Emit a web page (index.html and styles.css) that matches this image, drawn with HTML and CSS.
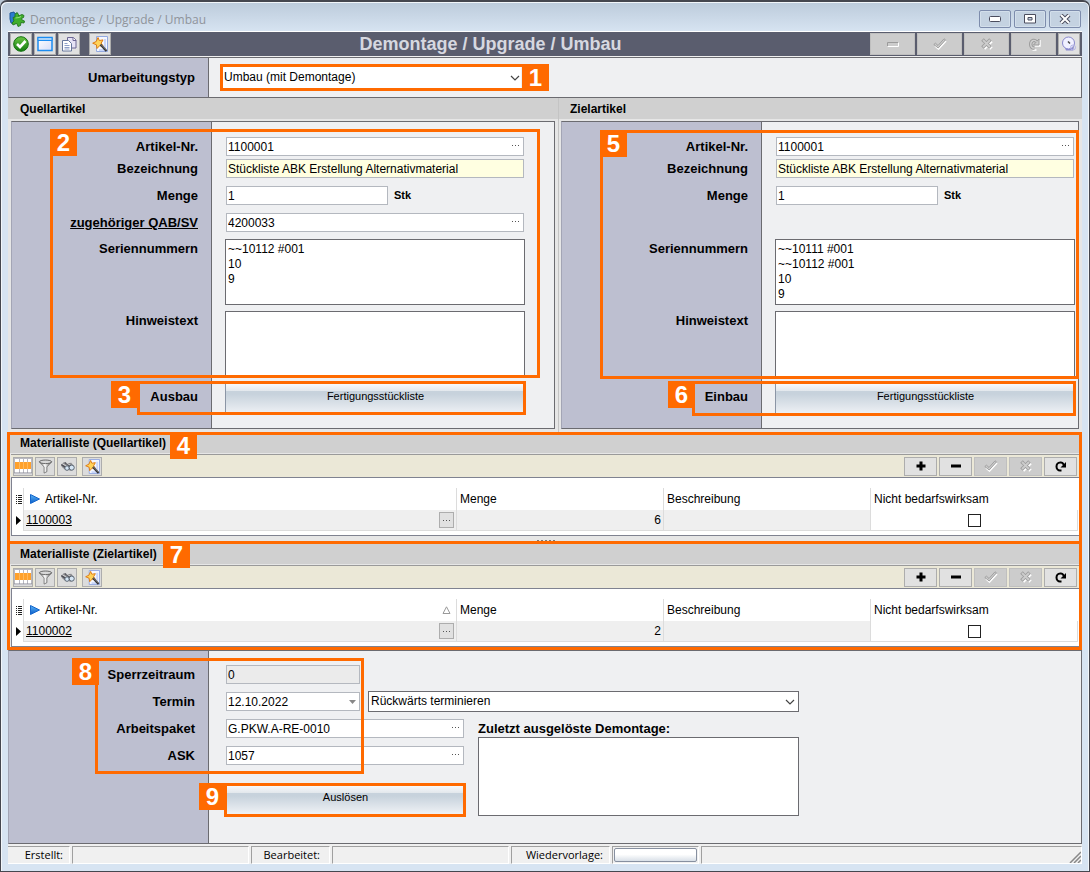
FILE: index.html
```
<!DOCTYPE html>
<html lang="de">
<head>
<meta charset="utf-8">
<title>Demontage / Upgrade / Umbau</title>
<link rel="stylesheet" href="styles.css">
</head>
<body>
<svg class="defs" aria-hidden="true">
  <defs>
    <linearGradient id="gGreen" x1="0" y1="0" x2="0" y2="1"><stop offset="0" stop-color="#6cc644"/><stop offset="1" stop-color="#127a10"/></linearGradient>
    <linearGradient id="gWin" x1="0" y1="0" x2="1" y2="1"><stop offset="0" stop-color="#fff"/><stop offset="1" stop-color="#d5dcf8"/></linearGradient>
    <linearGradient id="gFun" x1="0" y1="0" x2="1" y2="0"><stop offset="0" stop-color="#777"/><stop offset=".45" stop-color="#fff"/><stop offset="1" stop-color="#555"/></linearGradient>
    <linearGradient id="gPlay" x1="0" y1="0" x2="0" y2="1"><stop offset="0" stop-color="#5ab4f5"/><stop offset="1" stop-color="#0a5cc8"/></linearGradient>
  </defs>
  <symbol id="i-wand" viewBox="0 0 16 16">
    <path d="M4.500.5h11v15h-11z" fill="#f4f7ff" stroke="#93a9e0"/>
    <path d="M13 3v11H7" fill="none" stroke="#c9d6fa" stroke-width="2"/>
    <path d="M6 1.500l1.300 3 3.700-.6-1.800 3.300 2 3-3.600-.5L5 12.500l-.6-3.700L.7 7.200l3.500-1.700z" fill="#ffd35a" stroke="#e07b10"/>
    <path d="M8.500 8.500l6 6.500" stroke="#333" stroke-width="2.200"/>
    <path d="M9 8.500l5.500 5.500" stroke="#aaa" stroke-width=".7"/>
  </symbol>
  <symbol id="i-grid" viewBox="0 0 18 16">
    <path d="M0 0h18v16H0z" fill="#fff"/>
    <path d="M.5 0v15M5.500 0v15M9.500 0v15M13.500 0v15M17.500 0v15M0 .5h18" stroke="#b9b9c2"/>
    <path d="M1 4h16v7H1z" fill="#ffa12b"/>
    <path d="M5.500 4v7M9.500 4v7M13.500 4v7" stroke="#ffb85c"/>
    <path d="M0 15h18" stroke="#8a8a96"/>
  </symbol>
  <symbol id="i-funnel" viewBox="0 0 16 16">
    <path d="M1.500 3l5 5.500V15l3-1.500v-5L14.500 3z" fill="url(#gFun)" stroke="#666" stroke-width=".8"/>
    <ellipse cx="8" cy="3" rx="6.500" ry="1.900" fill="#d8d8d8" stroke="#555" stroke-width=".9"/>
  </symbol>
  <symbol id="i-binoc" viewBox="0 0 16 16">
    <path d="M1 6l3-2.500 4 1 4-.5 3 4-1.500 4-3 .5-2-2-3 1-3.500-3z" fill="#8c8c90"/>
    <path d="M1.500 6l6 4M5 3.800l6 4" stroke="#4e4e55" stroke-width="1.300"/>
    <path d="M2.500 5l5 3M7 4.500l4 2" stroke="#ddd"/>
    <circle cx="7.500" cy="9.700" r="2.400" fill="#d6e6f5" stroke="#55606c"/>
    <circle cx="12.500" cy="9.200" r="2.700" fill="#d6e6f5" stroke="#55606c"/>
  </symbol>
  <symbol id="i-check" viewBox="0 0 14 12">
    <path d="M2 8l3.500 3L13 3" fill="none" stroke="#fff" stroke-width="1.600"/>
    <path d="M.8 6.500L2.500 5.200 5 7.500 11 .8l1.500 1L5.200 10z" fill="#ccc" stroke="#9b9b9b" stroke-width=".9"/>
  </symbol>
  <symbol id="i-cross" viewBox="0 0 12 12">
    <path d="M3 3l7.500 7.500M10.500 3L3 10.500" stroke="#fff" stroke-width="3.400"/>
    <path d="M1.500 1.500l8 8M9.500 1.500l-8 8" stroke="#9b9b9b" stroke-width="3.600"/>
    <path d="M2 2l7 7M9 2L2 9" stroke="#ccc" stroke-width="1.800"/>
  </symbol>
  <symbol id="i-redo" viewBox="0 0 12 12">
    <path d="M6.500 10.500H5A3.500 4 0 0 1 5 2.500C7 2 8.500 3.500 8.500 5" fill="none" stroke="#000" stroke-width="2"/>
    <path d="M11 2v5.500H5.500z" fill="#000"/>
  </symbol>
  <symbol id="i-redo-off" viewBox="0 0 14 14">
    <path d="M13 3v6H7.500M9.500 13H5.500" fill="none" stroke="#fff" stroke-width="1.400"/>
    <path d="M7.500 11H6A3.500 4 0 0 1 6 3.500C8 3 9 4 9.500 5" fill="none" stroke="#9b9b9b" stroke-width="3.400"/>
    <path d="M12 2v6H6.500z" fill="#ccc" stroke="#9b9b9b"/>
    <path d="M7.500 11H6A3.500 4 0 0 1 6 3.500C8 3 9 4 9.500 5" fill="none" stroke="#d0d0d0" stroke-width="1.400"/>
  </symbol>
  <symbol id="i-plus" viewBox="0 0 10 10"><path d="M5 .5v9M.5 5h9" stroke="#000" stroke-width="3"/></symbol>
  <symbol id="i-minus" viewBox="0 0 10 10"><path d="M0 5h10" stroke="#000" stroke-width="3"/></symbol>
  <symbol id="i-chev" viewBox="0 0 10 6"><path d="M1 1l4 4 4-4" fill="none" stroke="#444" stroke-width="1.200"/></symbol>
  <symbol id="i-dots" viewBox="0 0 9 3"><path d="M1 1h1v1H1zM4 1h1v1H4zM7 1h1v1H7z" fill="#555"/></symbol>
</svg>

<div class="window">
  <header class="titlebar">
    <svg class="ic16" viewBox="0 0 16 16"><path d="M1 2l4-1 1 2 2-1 1 5-3 6-4-1-1-4z" fill="#2d7cd0" stroke="#1b5698"/><path d="M4 6.500l2-.5V3.500l2-2 1.500 2V5L13 3.500l2 1-.5 2-2 1 .5 1.500 2.500 1-.5 2-3-.5-.5 3-2.500 1-1-3-2 .5L4 14l-1-2 2-2z" fill="#3fae2e" stroke="#23771c" stroke-width=".9"/><path d="M6.500 7l3.500-.5L12 5.500" fill="none" stroke="#95e07a"/></svg>
    <span class="caption">Demontage / Upgrade / Umbau</span>
    <button class="sysbtn" type="button" aria-label="Minimieren"><svg width="12" height="6" viewBox="0 0 12 6"><rect x=".5" y=".5" width="11" height="5" rx="1" fill="#fff" stroke="#4b4d5e"/></svg></button>
    <button class="sysbtn" type="button" aria-label="Maximieren"><svg width="12" height="10" viewBox="0 0 12 10"><path d="M.5.5h11v8.500H.5z" fill="#fff" stroke="#4b4d5e"/><path d="M4 3.500h4v2.500H4z" fill="#c4d2e2" stroke="#4b4d5e"/></svg></button>
    <button class="sysbtn" type="button" aria-label="Schließen"><svg width="12" height="10" viewBox="0 0 12 10"><path d="M2 1l8 8M10 1L2 9" stroke="#4b4d5e" stroke-width="4"/><path d="M2 1l8 8M10 1L2 9" stroke="#fff" stroke-width="2"/></svg></button>
  </header>

  <div class="content">
    <div class="toolbar">
      <button class="tool" type="button" aria-label="OK"><svg class="ic16" viewBox="0 0 16 16"><circle cx="8" cy="8" r="7.300" fill="url(#gGreen)" stroke="#12700f"/><path d="M4 8l3 3 5.500-6" fill="none" stroke="#fff" stroke-width="2.600"/></svg></button>
      <button class="tool" type="button" aria-label="Fenster"><svg class="ic16" viewBox="0 0 16 16"><path d="M1 1.500h14v13H1z" fill="url(#gWin)" stroke="#1c8cf0" stroke-width="1.500"/><path d="M1 1.500h14v3H1z" fill="#a9d4fb" stroke="#1c8cf0"/></svg></button>
      <button class="tool" type="button" aria-label="Kopieren"><svg class="ic16" viewBox="0 0 16 16"><path d="M6.500 1.500h6l2.500 2.500v8H6.500z" fill="#e6e3f6" stroke="#6d6795"/><path d="M12 1.500V4.500h3" fill="#fff" stroke="#6d6795"/><path d="M1.500 4.500h6l3 3v7.500h-9z" fill="#fff" stroke="#67779c"/><path d="M3.500 7.500h3M3.500 9.500h5M3.500 11.500h5M3.500 13h5" stroke="#8fa0c8"/></svg></button>
      <button class="tool tool-gap" type="button" aria-label="Assistent"><svg class="ic16"><use href="#i-wand"/></svg></button>
      <h1>Demontage / Upgrade / Umbau</h1>
      <button class="wide" type="button" disabled aria-label="Entfernen"><svg width="12" height="5" viewBox="0 0 12 5"><path d="M.5 4.500v-4h11" fill="none" stroke="#9b9b9b"/><path d="M.5 4.500h11v-4" fill="none" stroke="#fff"/></svg></button>
      <button class="wide" type="button" disabled aria-label="Speichern"><svg width="14" height="12"><use href="#i-check"/></svg></button>
      <button class="wide" type="button" disabled aria-label="Verwerfen"><svg width="12" height="12"><use href="#i-cross"/></svg></button>
      <button class="wide" type="button" disabled aria-label="Aktualisieren"><svg width="14" height="14"><use href="#i-redo-off"/></svg></button>
      <button class="tool" type="button" aria-label="Verlauf"><svg class="ic16" viewBox="0 0 16 16"><path d="M4 12l9-1-1 3.500H5z" fill="#8d8dd0"/><circle cx="7.500" cy="7" r="6" fill="#f1f1ff" stroke="#8888cc"/><circle cx="12" cy="11.500" r="2.500" fill="none" stroke="#b3b3e6"/><path d="M7 5.500l2 2" stroke="#444" stroke-width="1.500"/></svg></button>
    </div>

    <div class="typebar split">
      <label class="lbl" for="typ">Umarbeitungstyp</label>
      <div class="combo typ"><select id="typ"><option>Umbau (mit Demontage)</option></select><svg width="10" height="6"><use href="#i-chev"/></svg></div>
      <div class="mark m1"></div><b class="tag t1">1</b>
    </div>

    <div class="columns">
      <section class="article">
        <h2>Quellartikel</h2>
        <div class="panel split">
          <div class="row"><label class="lbl" for="q1">Artikel-Nr.</label><div class="field"><input id="q1" value="1100001"><svg width="9" height="3"><use href="#i-dots"/></svg></div></div>
          <div class="row"><label class="lbl" for="q2">Bezeichnung</label><div class="field"><input class="yellow" id="q2" value="Stückliste ABK Erstellung Alternativmaterial" readonly></div></div>
          <div class="row"><label class="lbl" for="q3">Menge</label><div class="field short"><input id="q3" value="1"></div><span class="unit">Stk</span></div>
          <div class="row snug"><label class="lbl" for="q4"><a href="#q4">zugehöriger QAB/SV</a></label><div class="field"><input id="q4" value="4200033"><svg width="9" height="3"><use href="#i-dots"/></svg></div></div>
          <div class="row area"><label class="lbl" for="q5">Seriennummern</label><textarea id="q5">~~10112 #001
10
9</textarea></div>
          <div class="row area"><label class="lbl" for="q6">Hinweistext</label><textarea id="q6"></textarea></div>
          <div class="row btnrow"><span class="lbl">Ausbau</span><button class="push" type="button">Fertigungsstückliste</button></div>
        </div>
        <div class="mark m2"></div><b class="tag t2">2</b>
        <div class="mark m3"></div><b class="tag t3">3</b>
      </section>
      <section class="article">
        <h2>Zielartikel</h2>
        <div class="panel split">
          <div class="row"><label class="lbl" for="z1">Artikel-Nr.</label><div class="field"><input id="z1" value="1100001"><svg width="9" height="3"><use href="#i-dots"/></svg></div></div>
          <div class="row"><label class="lbl" for="z2">Bezeichnung</label><div class="field"><input class="yellow" id="z2" value="Stückliste ABK Erstellung Alternativmaterial" readonly></div></div>
          <div class="row"><label class="lbl" for="z3">Menge</label><div class="field short"><input id="z3" value="1"></div><span class="unit">Stk</span></div>
          <div class="row snug"></div>
          <div class="row area"><label class="lbl" for="z5">Seriennummern</label><textarea id="z5">~~10111 #001
~~10112 #001
10
9</textarea></div>
          <div class="row area"><label class="lbl" for="z6">Hinweistext</label><textarea id="z6"></textarea></div>
          <div class="row btnrow"><span class="lbl">Einbau</span><button class="push" type="button">Fertigungsstückliste</button></div>
        </div>
        <div class="mark m5"></div><b class="tag t5">5</b>
        <div class="mark m6"></div><b class="tag t6">6</b>
      </section>
    </div>

    <section class="list">
      <h2>Materialliste (Quellartikel)</h2>
      <div class="listbar">
        <button class="mini" type="button" aria-label="Ansicht"><svg width="18" height="16"><use href="#i-grid"/></svg></button>
        <button class="mini" type="button" aria-label="Filter"><svg class="ic16"><use href="#i-funnel"/></svg></button>
        <button class="mini" type="button" aria-label="Suchen"><svg class="ic16"><use href="#i-binoc"/></svg></button>
        <button class="mini mini-gap" type="button" aria-label="Assistent"><svg class="ic16"><use href="#i-wand"/></svg></button>
        <span class="grow"></span>
        <button class="mid" type="button" aria-label="Hinzufügen"><svg width="10" height="10"><use href="#i-plus"/></svg></button>
        <button class="mid" type="button" aria-label="Löschen"><svg width="10" height="10"><use href="#i-minus"/></svg></button>
        <button class="mid" type="button" disabled aria-label="Übernehmen"><svg width="14" height="12"><use href="#i-check"/></svg></button>
        <button class="mid" type="button" disabled aria-label="Abbrechen"><svg width="12" height="12"><use href="#i-cross"/></svg></button>
        <button class="mid" type="button" aria-label="Aktualisieren"><svg width="12" height="12"><use href="#i-redo"/></svg></button>
      </div>
      <div class="tablebox">
        <table>
          <colgroup><col class="c0"><col><col class="cw"><col class="cw"><col class="cw"></colgroup>
          <thead><tr>
            <th><svg width="7" height="9" viewBox="0 0 7 9"><path d="M0 .5h1M2 .5h4M0 2.500h1M2 2.500h4M0 4.500h1M2 4.500h4M0 6.500h1M2 6.500h4M0 8.500h1M2 8.500h4" stroke="#222"/></svg></th>
            <th><div class="cell"><svg class="play" width="10" height="10" viewBox="0 0 10 10"><path d="M.5.5L9.500 5l-9 4.500z" fill="url(#gPlay)" stroke="#1466cc"/></svg>Artikel-Nr.</div></th>
            <th>Menge</th><th>Beschreibung</th><th>Nicht bedarfswirksam</th>
          </tr></thead>
          <tbody><tr>
            <td class="ind"><svg width="6" height="9" viewBox="0 0 6 9"><path d="M0 0l5 4.500L0 9z"/></svg></td>
            <td><div class="cell"><a href="#a3">1100003</a><span class="grow"></span><button class="more" type="button" aria-label="Auswahl"><svg width="9" height="3"><use href="#i-dots"/></svg></button></div></td>
            <td class="num">6</td><td></td>
            <td class="chk"><input type="checkbox" aria-label="Nicht bedarfswirksam"></td>
          </tr></tbody>
        </table>
      </div>
      <div class="grip"></div>
      <div class="mark mlist"></div><b class="tag t4">4</b>
    </section>

    <section class="list">
      <h2>Materialliste (Zielartikel)</h2>
      <div class="listbar">
        <button class="mini" type="button" aria-label="Ansicht"><svg width="18" height="16"><use href="#i-grid"/></svg></button>
        <button class="mini" type="button" aria-label="Filter"><svg class="ic16"><use href="#i-funnel"/></svg></button>
        <button class="mini" type="button" aria-label="Suchen"><svg class="ic16"><use href="#i-binoc"/></svg></button>
        <button class="mini mini-gap" type="button" aria-label="Assistent"><svg class="ic16"><use href="#i-wand"/></svg></button>
        <span class="grow"></span>
        <button class="mid" type="button" aria-label="Hinzufügen"><svg width="10" height="10"><use href="#i-plus"/></svg></button>
        <button class="mid" type="button" aria-label="Löschen"><svg width="10" height="10"><use href="#i-minus"/></svg></button>
        <button class="mid" type="button" disabled aria-label="Übernehmen"><svg width="14" height="12"><use href="#i-check"/></svg></button>
        <button class="mid" type="button" disabled aria-label="Abbrechen"><svg width="12" height="12"><use href="#i-cross"/></svg></button>
        <button class="mid" type="button" aria-label="Aktualisieren"><svg width="12" height="12"><use href="#i-redo"/></svg></button>
      </div>
      <div class="tablebox">
        <table>
          <colgroup><col class="c0"><col><col class="cw"><col class="cw"><col class="cw"></colgroup>
          <thead><tr>
            <th><svg width="7" height="9" viewBox="0 0 7 9"><path d="M0 .5h1M2 .5h4M0 2.500h1M2 2.500h4M0 4.500h1M2 4.500h4M0 6.500h1M2 6.500h4M0 8.500h1M2 8.500h4" stroke="#222"/></svg></th>
            <th><div class="cell"><svg class="play" width="10" height="10" viewBox="0 0 10 10"><path d="M.5.5L9.500 5l-9 4.500z" fill="url(#gPlay)" stroke="#1466cc"/></svg>Artikel-Nr.<span class="grow"></span><svg class="sort" width="9" height="8" viewBox="0 0 9 8"><path d="M4.500.8l3.500 6.700H1z" fill="#fff" stroke="#999"/></svg></div></th>
            <th>Menge</th><th>Beschreibung</th><th>Nicht bedarfswirksam</th>
          </tr></thead>
          <tbody><tr>
            <td class="ind"><svg width="6" height="9" viewBox="0 0 6 9"><path d="M0 0l5 4.500L0 9z"/></svg></td>
            <td><div class="cell"><a href="#a2">1100002</a><span class="grow"></span><button class="more" type="button" aria-label="Auswahl"><svg width="9" height="3"><use href="#i-dots"/></svg></button></div></td>
            <td class="num">2</td><td></td>
            <td class="chk"><input type="checkbox" aria-label="Nicht bedarfswirksam"></td>
          </tr></tbody>
        </table>
      </div>
      <div class="mark mlist last"></div><b class="tag t7">7</b>
    </section>

    <section class="lower split">
      <div class="row"><label class="lbl" for="f1">Sperrzeitraum</label><div class="field date"><input class="gray" id="f1" value="0" readonly></div></div>
      <div class="row"><label class="lbl" for="f2">Termin</label><div class="field date"><input id="f2" value="12.10.2022"><svg class="drop" width="7" height="4" viewBox="0 0 7 4"><path d="M0 0h7L3.500 4z" fill="#888"/></svg></div>
        <div class="combo term"><select aria-label="Terminierung"><option>Rückwärts terminieren</option></select><svg width="10" height="6"><use href="#i-chev"/></svg></div></div>
      <div class="pair">
        <div class="pair-left">
          <div class="row"><label class="lbl" for="f3">Arbeitspaket</label><div class="field medium"><input id="f3" value="G.PKW.A-RE-0010"><svg width="9" height="3"><use href="#i-dots"/></svg></div></div>
          <div class="row"><label class="lbl" for="f4">ASK</label><div class="field medium"><input id="f4" value="1057"><svg width="9" height="3"><use href="#i-dots"/></svg></div></div>
          <div class="row"><span class="lbl"></span><button class="push release" type="button">Auslösen</button></div>
        </div>
        <div class="last-run">
          <label for="f5">Zuletzt ausgelöste Demontage:</label>
          <textarea id="f5"></textarea>
        </div>
      </div>
      <div class="mark m8"></div><b class="tag t8">8</b>
      <div class="mark m9"></div><b class="tag t9">9</b>
    </section>

    <footer class="status">
      <span class="s1">Erstellt:</span><span class="s2"></span><span class="s3">Bearbeitet:</span><span class="s2"></span><span class="s4">Wiedervorlage:</span>
      <span class="s5"><button type="button" aria-label="Wiedervorlage"></button></span>
      <span class="s6"><svg width="12" height="12" viewBox="0 0 12 12"><path d="M1 12L12 1M5 12l7-7M9 12l3-3" stroke="#888" stroke-width="1.500"/></svg></span>
    </footer>
  </div>
</div>
</body>
</html>
```
FILE: styles.css
```
* { box-sizing: border-box; }
body { margin: 0; background: #b9c6d4; font: 12px/15px "Liberation Sans", Arial, sans-serif; color: #000; }
button, input, select, textarea { font: inherit; color: inherit; margin: 0; }
a { color: inherit; }
svg { display: block; flex: none; }
.defs { position: absolute; width: 0; height: 0; }
.ic16 { width: 16px; height: 16px; }
.grow { flex: 1; }

.window { min-height: 100vh; display: flex; flex-direction: column; border: 1px solid #45474f; border-top-width: 2px; border-radius: 7px 7px 0 0; background: linear-gradient(#bccbdb, #d7e4f2 30px); box-shadow: inset 1px 1px #f2f6fa, inset -1px 0 #f2f6fa; padding: 0 7px 7px; }
.titlebar { height: 29px; display: flex; align-items: center; gap: 3px; padding: 5px 1px 0 1px; }
.caption { flex: 1; margin-left: 2px; padding-top: 1px; font: 12px/16px "Open Sans", sans-serif; color: #8f949b; }
.sysbtn { width: 32px; height: 18px; display: flex; align-items: center; justify-content: center; padding: 0; border: 1px solid #7d8cac; border-radius: 2px; background: #c4d2e1; box-shadow: inset 0 0 0 1px #d3dfeb; }
.content { flex: 1; display: flex; flex-direction: column; background: #f0f0f0; border-top: 1px solid #fff; }

.toolbar { display: flex; align-items: center; gap: 2px; height: 24px; padding: 0 2px; background: #5a5d6e; }
.tool, .wide, .mini, .mid, .more { display: flex; align-items: center; justify-content: center; padding: 0; flex: none; background: #e1e1e1; border: 1px solid #adadad; }
.tool { width: 22px; height: 22px; }
.tool-gap { margin-left: 7px; }
.wide { width: 45px; height: 22px; }
.wide:disabled, .mid:disabled { background: #ccc; border-color: #bfbfbf; }
h1 { flex: 1; margin: 0; text-align: center; font-size: 18px; line-height: 22px; color: #d6d8e0; }

.split { background: linear-gradient(to right, #bdbfd0 199px, #6b6b70 199px, #6b6b70 200px, #eff0f2 200px); border: 1px solid #6b6b70; border-left-color: #a3a5b5; }
.lbl { width: 186px; flex: none; text-align: right; font-size: 13px; font-weight: bold; line-height: 19px; }
.typebar { position: relative; display: flex; align-items: center; height: 41px; margin-top: 1px; }
.combo { position: relative; height: 21px; }
.combo select { display: block; width: 100%; height: 100%; appearance: none; background: #fff; border: 1px solid #6b6b70; border-radius: 0; padding: 0 2px; outline: 0; }
.combo svg { position: absolute; right: 4px; top: 8px; pointer-events: none; }
.typ { width: 298px; margin-left: 28px; }
.combo.typ select { border: 0; padding: 0 1px; }
.combo.typ svg { right: 1px; }

.columns { display: grid; grid-template-columns: 550fr 524fr; background: #e6e6e6; }
.article { position: relative; padding-bottom: 3px; }
.article + .article { border-left: 1px solid #c4c4c4; }
h2 { margin: 0; background: #d0d0d0; font-size: 12px; line-height: 22px; height: 21px; padding-left: 12px; }
.article + .article h2 { padding-left: 11px; }
.panel { margin: 2px 3px 0; padding: 15px 0; min-height: 308px; }
.article + .article .panel { margin-left: 2px; }
.row { display: flex; min-height: 19px; margin-bottom: 8px; }
.article .row:first-child { margin-bottom: 3px; }
.row.snug { margin-bottom: 7px; }
.row.area { margin-bottom: 6px; align-items: flex-start; }
.field { position: relative; margin-left: 28px; width: 298px; height: 19px; }
.field.short { width: 162px; }
.field.medium { width: 238px; }
.field.date { width: 134px; }
.field input { display: block; width: 100%; height: 100%; border: 1px solid #b4b8bf; padding: 0 1px; background: #fff; border-radius: 0; }
.field input.yellow { background: #ffffe1; }
.field input.gray { background: #ebebeb; }
.field svg { position: absolute; right: 4px; top: 7px; }
.field svg.drop { top: 8px; }
.unit { margin-left: 6px; font-size: 11px; font-weight: bold; line-height: 19px; }
textarea { display: block; resize: none; border: 1px solid #6b6b70; border-radius: 0; background: #fff; padding: 2px 2px 0; line-height: 15px; height: 66px; width: 300px; margin-left: 27px; overflow: hidden; }
.push { margin-left: 27px; width: 300px; height: 30px; border: 0; border-left: 1px solid #8b95a5; padding: 0 0 3px; font-size: 11px; background: linear-gradient(#fbfcfd, #e2e7ec 8px, #c7d2dc 8px, #c7d2dc 11px, #edf0f4); }
.btnrow { margin-bottom: 0; align-items: center; }
.btnrow .lbl { padding-bottom: 3px; }

.list { position: relative; background: #e6e6e6; padding: 1px 2px 0 3px; }
.list h2 { margin: 0 -2px 0 -3px; height: 20px; line-height: 20px; }
.listbar { display: flex; align-items: center; gap: 2px; margin-top: 1px; height: 23px; border-top: 1px solid #9a9a9a; padding: 0 3px 0 2px; background: #ebe8d7; }
.mini { width: 20px; height: 19px; background: #dcdcdc; }
.mini .ic16 { width: 15px; height: 15px; }
.mini-gap { margin-left: 3px; }
.mid { width: 33px; height: 19px; }
.tablebox { border: 1px solid #7f8290; border-right: 0; background: #fff; padding: 10px 2px 4px 0; }
table { width: 100%; table-layout: fixed; border-collapse: separate; border-spacing: 0; }
.c0 { width: 12px; }
.cw { width: 207px; }
th, td { padding: 0 3px; text-align: left; font-weight: normal; border-right: 1px solid #dcdcdc; }
th { height: 22px; }
th:first-child, .ind { padding: 0 0 0 4px; }
th:last-child { border-right: 0; }
td { height: 21px; background: #efefef; border-bottom: 1px solid #dcdcdc; }
td.ind { background: #fff; border-bottom: 0; }
td.num { text-align: right; padding-right: 2px; }
td.chk { background: #fff; text-align: center; }
td:nth-child(2) { padding-left: 2px; }
.chk input { display: block; appearance: none; width: 13px; height: 13px; margin: 0 auto; border: 1px solid #222; background: #fff; }
.cell { display: flex; align-items: center; }
.play { margin: 0 5px 0 3px; }
.sort { margin-right: 2px; }
.more { width: 15px; height: 16px; margin-right: -1px; }
.grip { height: 7px; background: repeating-linear-gradient(to right, #777 0 2px, transparent 2px 4px) center 4px / 18px 1px no-repeat; }

.lower { position: relative; flex: 1; margin-top: 3px; padding: 14px 0 10px; }
.lower .field { margin-left: 31px; }
.term { width: 431px; margin: -1px 0 -1px 8px; }
.pair { display: flex; gap: 14px; }
.last-run { flex: none; width: 321px; font-size: 13px; font-weight: bold; line-height: 16px; padding-top: 2px; }
.last-run label { display: block; }
.last-run textarea { width: 100%; height: 79px; margin: 0; }
.push.release { width: 238px; height: 28px; margin: 12px 0 0 31px; }

.status { display: flex; gap: 2px; height: 20px; padding-top: 2px; font: 11px/18px "Open Sans", sans-serif; }
.status span { border: 1px solid; border-color: #a0a0a0 #fff #fff #a0a0a0; flex: none; line-height: 16px; text-align: right; padding-right: 6px; }
.status .s1 { width: 62px; border-left: 0; }
.status .s2 { width: 177px; }
.status .s3 { width: 79px; padding-right: 9px; }
.status .s4 { width: 99px; }
.status .s5 { width: 87px; padding: 1px; }
.status button { display: block; width: 100%; height: 14px; border: 1px solid #8790a0; border-radius: 2px; padding: 0; background: linear-gradient(#fff 45%, #d9e0e8); }
.status .s6 { flex: 1; display: flex; justify-content: flex-end; align-items: flex-end; padding: 0; }

/* numbered callouts laid over the form */
.mark { position: absolute; border: 3px solid #ff6a00; pointer-events: none; }
.tag { position: absolute; width: 27px; height: 27px; background: #ff6a00; color: #fff; font-size: 24px; line-height: 27px; text-align: center; }
.m1 { left: 211px; top: 6px; width: 329px; height: 27px; }
.t1 { left: 513px; top: 6px; }
.m2 { left: 42px; top: 31px; width: 490px; height: 249px; }
.t2 { left: 42px; top: 31px; }
.m3 { left: 129px; top: 283px; width: 389px; height: 34px; }
.t3 { left: 103px; top: 283px; }
.m5 { left: 41px; top: 32px; right: 3px; height: 249px; }
.t5 { left: 41px; top: 32px; }
.m6 { left: 133px; top: 283px; right: 6px; height: 35px; }
.t6 { left: 109px; top: 283px; }
.mlist { left: -1px; right: 0; top: 0; bottom: -2px; }
.mlist.last { top: -2px; bottom: -3px; }
.t4 { left: 162px; top: 0; }
.t7 { left: 155px; top: -2px; }
.m8 { left: 86px; top: 7px; width: 269px; height: 116px; }
.t8 { left: 63px; top: 7px; }
.m9 { left: 215px; top: 132px; width: 242px; height: 34px; }
.t9 { left: 190px; top: 132px; }
```
